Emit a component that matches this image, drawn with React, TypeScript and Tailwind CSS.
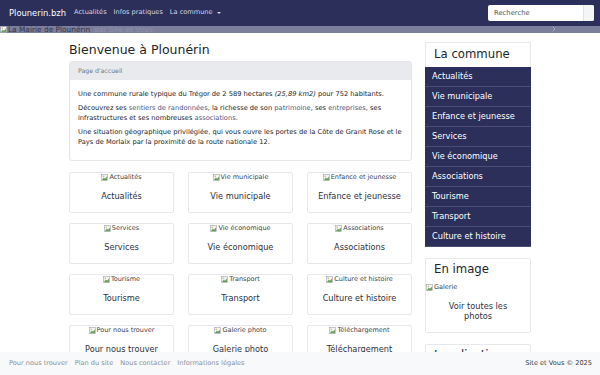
import { ChevronRight } from 'lucide-react';

const font = { fontFamily: '"DejaVu Sans", Verdana, sans-serif' };

const tiles = [
  'Actualités',
  'Vie municipale',
  'Enfance et jeunesse',
  'Services',
  'Vie économique',
  'Associations',
  'Tourisme',
  'Transport',
  'Culture et histoire',
  'Pour nous trouver',
  'Galerie photo',
  'Téléchargement',
];

const menu = [
  'Actualités',
  'Vie municipale',
  'Enfance et jeunesse',
  'Services',
  'Vie économique',
  'Associations',
  'Tourisme',
  'Transport',
  'Culture et histoire',
];

// image cassée : icône du navigateur + texte alternatif
function BrokenImg({ alt }: { alt: string }) {
  return (
    <span className="inline-flex items-center h-[7px] text-[6.5px] leading-[7px] text-[#3b3f4a]">
      <svg width="7" height="7" viewBox="0 0 7 7" className="mr-[1px] shrink-0">
        <rect x="0.5" y="0.5" width="6" height="6" fill="#f3f4f6" stroke="#9ca3af" strokeWidth="0.6" />
        <path d="M1 6 L2.8 3.6 L4 4.8 L6 2.6 L6 6.2 L1 6.2 Z" fill="#6b9f5b" />
        <circle cx="2.2" cy="2.2" r="0.7" fill="#e0a040" />
      </svg>
      {alt}
    </span>
  );
}

export default function App() {
  return (
    <div className="min-h-screen bg-white text-[#212529]" style={font}>
      {/* Navbar */}
      <nav className="h-[26px] bg-[#2b2f5a] flex items-center pl-[9px] pr-[6px]">
        <span className="text-white text-[8.4px] mr-[8px]">Plounerin.bzh</span>
        <div className="flex items-center gap-[7px] text-[6.6px] text-[#d6d8e4]">
          <span>Actualités</span>
          <span>Infos pratiques</span>
          <span className="flex items-center">
            La commune
            <span className="ml-[4px] inline-block border-x-[2px] border-t-[2.5px] border-x-transparent border-t-[#d6d8e4]" />
          </span>
        </div>
        <div className="ml-auto flex h-[16px] w-[106px] rounded-[2px] overflow-hidden bg-white">
          <span className="flex-1 pl-[6px] text-[6.8px] leading-[16px] text-[#555]">Recherche</span>
          <span className="w-[11px] border-l border-[#dee2e6] bg-[#f4f5f7]" />
        </div>
      </nav>

      {/* Bandeau */}
      <div className="relative h-[7px] bg-[#7c7f9b] overflow-hidden">
        <div className="flex items-center text-[7.4px] leading-[7px] text-[#33354a]">
          <BrokenImg alt="" />
          <span>La Mairie de Plounérin</span>
          <span className="ml-[4px] text-[#8e90ab]">par Site et Vous</span>
        </div>
        <ChevronRight className="absolute left-[550px] top-[-1px] w-[8px] h-[8px] text-[#a9abc2]" strokeWidth={3} />
      </div>

      {/* Contenu */}
      <div className="mx-auto w-[462px] flex gap-[13px] pt-[9px] pb-[40px]">
        <div className="w-[343px]">
          <h1 className="text-[12.5px] leading-[15px] mb-[4px]">Bienvenue à Plounérin</h1>
          <div className="border border-[#e3e5e8] rounded-[3px] overflow-hidden">
            <div className="bg-[#e9eaed] px-[8px] h-[18px] flex items-center text-[6.2px] text-[#6c757d]">
              Page d'accueil
            </div>
            <div className="px-[8px] pt-[9px] pb-[9px] text-[6.7px] leading-[10px] text-[#212529]">
              <p className="mb-[4px]">
                Une commune rurale typique du Trégor de 2 589 hectares <em>(25,89 km2)</em> pour 752 habitants.
              </p>
              <p className="mb-[4px]">
                Découvrez ses <span className="text-[#4e5882]">sentiers de randonnées</span>, la richesse de son{' '}
                <span className="text-[#4e5882]">patrimoine</span>, ses <span className="text-[#4e5882]">entreprises</span>, ses
                infrastructures et ses nombreuses <span className="text-[#4e5882]">associations</span>.
              </p>
              <p className="mb-[4px]">
                Une situation géographique privilégiée, qui vous ouvre les portes de la Côte de Granit Rose et le Pays
                de Morlaix par la proximité de la route nationale 12.
              </p>
            </div>
          </div>

          <div className="grid grid-cols-3 gap-x-[14px] gap-y-[10px] mt-[11px]">
            {tiles.map((t) => (
              <div key={t} className="h-[41px] border border-[#e6e8eb] rounded-[2px] flex flex-col items-center pt-[1px]">
                <BrokenImg alt={t} />
                <span className="mt-[10px] text-[8.2px] leading-[10px] text-[#2d2f3a]">{t}</span>
              </div>
            ))}
          </div>
        </div>

        {/* Colonne latérale */}
        <div className="w-[106px] flex flex-col gap-[11px]">
          <div>
            <div className="h-[25px] border border-b-0 border-[#e6e8eb] flex items-center px-[8px] text-[11.7px]">
              La commune
            </div>
            <ul className="bg-[#2b2f5a] text-white text-[8.2px]">
              {menu.map((m) => (
                <li key={m} className="h-[20px] flex items-center px-[7px] border-b border-[#4a4e77]">
                  {m}
                </li>
              ))}
            </ul>
          </div>

          <div className="h-[75px] border border-[#e6e8eb] rounded-[2px]">
            <div className="px-[8px] pt-[1px] text-[11.7px] leading-[18px]">En image</div>
            <div className="mt-[6px] flex">
              <BrokenImg alt="Galerie" />
            </div>
            <div className="mt-[10px] text-center text-[8.2px] leading-[10px] px-[14px] text-[#2d2f3a]">
              Voir toutes les photos
            </div>
          </div>

          <div className="h-[60px] border border-[#e6e8eb] rounded-[2px]">
            <div className="px-[8px] pt-[1px] text-[11.7px] leading-[18px]">Localisation</div>
          </div>
        </div>
      </div>

      {/* Pied de page */}
      <footer className="fixed bottom-0 left-0 right-0 h-[23px] bg-[#f8f9fa] flex items-center pl-[9px] pr-[8px] text-[6.6px]">
        <div className="flex gap-[7px] text-[#8a8f98]">
          <span>Pour nous trouver</span>
          <span>Plan du site</span>
          <span>Nous contacter</span>
          <span>Informations légales</span>
        </div>
        <span className="ml-auto text-[#343a40]">Site et Vous © 2025</span>
      </footer>
    </div>
  );
}
